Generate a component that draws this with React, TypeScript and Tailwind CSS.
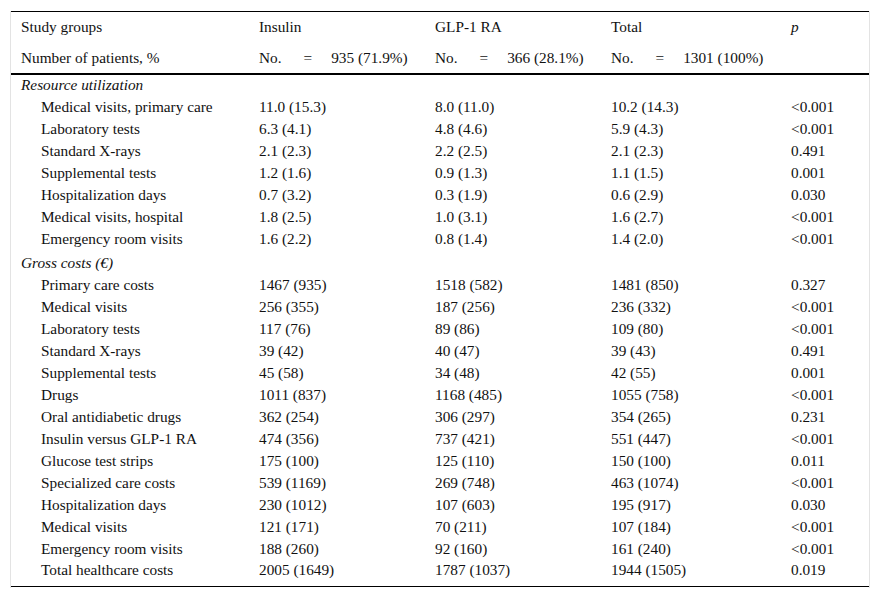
import React from 'react';

type Row = { label: string; ins: string; glp: string; total: string; p: string };
type Section = { title: string; rows: Row[] };

const SECTIONS: Section[] = [
  {
    title: 'Resource utilization',
    rows: [
      { label: 'Medical visits, primary care', ins: '11.0 (15.3)', glp: '8.0 (11.0)', total: '10.2 (14.3)', p: '<0.001' },
      { label: 'Laboratory tests', ins: '6.3 (4.1)', glp: '4.8 (4.6)', total: '5.9 (4.3)', p: '<0.001' },
      { label: 'Standard X-rays', ins: '2.1 (2.3)', glp: '2.2 (2.5)', total: '2.1 (2.3)', p: '0.491' },
      { label: 'Supplemental tests', ins: '1.2 (1.6)', glp: '0.9 (1.3)', total: '1.1 (1.5)', p: '0.001' },
      { label: 'Hospitalization days', ins: '0.7 (3.2)', glp: '0.3 (1.9)', total: '0.6 (2.9)', p: '0.030' },
      { label: 'Medical visits, hospital', ins: '1.8 (2.5)', glp: '1.0 (3.1)', total: '1.6 (2.7)', p: '<0.001' },
      { label: 'Emergency room visits', ins: '1.6 (2.2)', glp: '0.8 (1.4)', total: '1.4 (2.0)', p: '<0.001' },
    ],
  },
  {
    title: 'Gross costs (€)',
    rows: [
      { label: 'Primary care costs', ins: '1467 (935)', glp: '1518 (582)', total: '1481 (850)', p: '0.327' },
      { label: 'Medical visits', ins: '256 (355)', glp: '187 (256)', total: '236 (332)', p: '<0.001' },
      { label: 'Laboratory tests', ins: '117 (76)', glp: '89 (86)', total: '109 (80)', p: '<0.001' },
      { label: 'Standard X-rays', ins: '39 (42)', glp: '40 (47)', total: '39 (43)', p: '0.491' },
      { label: 'Supplemental tests', ins: '45 (58)', glp: '34 (48)', total: '42 (55)', p: '0.001' },
      { label: 'Drugs', ins: '1011 (837)', glp: '1168 (485)', total: '1055 (758)', p: '<0.001' },
      { label: 'Oral antidiabetic drugs', ins: '362 (254)', glp: '306 (297)', total: '354 (265)', p: '0.231' },
      { label: 'Insulin versus GLP-1 RA', ins: '474 (356)', glp: '737 (421)', total: '551 (447)', p: '<0.001' },
      { label: 'Glucose test strips', ins: '175 (100)', glp: '125 (110)', total: '150 (100)', p: '0.011' },
      { label: 'Specialized care costs', ins: '539 (1169)', glp: '269 (748)', total: '463 (1074)', p: '<0.001' },
      { label: 'Hospitalization days', ins: '230 (1012)', glp: '107 (603)', total: '195 (917)', p: '0.030' },
      { label: 'Medical visits', ins: '121 (171)', glp: '70 (211)', total: '107 (184)', p: '<0.001' },
      { label: 'Emergency room visits', ins: '188 (260)', glp: '92 (160)', total: '161 (240)', p: '<0.001' },
      { label: 'Total healthcare costs', ins: '2005 (1649)', glp: '1787 (1037)', total: '1944 (1505)', p: '0.019' },
    ],
  },
];

// header "No. = n (x%)" cell
function Count({ n }: { n: string }) {
  return (
    <span className="flex items-baseline">
      <span>No.</span>
      <span className="ml-[22px]">=</span>
      <span className="ml-[19px]">{n}</span>
    </span>
  );
}

export default function App() {
  return (
    <div className="min-h-screen bg-white pt-[11px] font-['Liberation_Serif','Times_New_Roman',serif] text-[15.3px] leading-[18px] text-[#111]">
      <div className="ml-[10px] w-[860px] border-x border-[#e3e3e3] pb-[1px]">
        <table className="w-[858px] table-fixed border-collapse">
          <colgroup>
            <col className="w-[238px]" />
            <col className="w-[176px]" />
            <col className="w-[176px]" />
            <col className="w-[180px]" />
            <col className="w-[88px]" />
          </colgroup>
          <thead>
            <tr className="h-[31px] border-t border-black">
              <th className="pl-[10px] text-left font-normal">Study groups</th>
              <th className="pl-[10px] text-left font-normal">Insulin</th>
              <th className="pl-[10px] text-left font-normal">GLP-1 RA</th>
              <th className="pl-[10px] text-left font-normal">Total</th>
              <th className="pl-[10px] text-left font-normal italic">p</th>
            </tr>
            <tr className="h-[31px] border-b-2 border-black">
              <th className="pl-[10px] text-left font-normal">Number of patients, %</th>
              <th className="pl-[10px] text-left font-normal"><Count n="935 (71.9%)" /></th>
              <th className="pl-[10px] text-left font-normal"><Count n="366 (28.1%)" /></th>
              <th className="pl-[10px] text-left font-normal"><Count n="1301 (100%)" /></th>
              <th />
            </tr>
          </thead>
          <tbody className="border-b border-black">
            {SECTIONS.map((s, si) => (
              <React.Fragment key={s.title}>
                <tr className={si === 0 ? 'h-[22px]' : 'h-[24px]'}>
                  <td colSpan={5} className={si === 0 ? 'pl-[10px] italic' : 'pl-[10px] pt-[2px] italic'}>{s.title}</td>
                </tr>
                {s.rows.map((r, i) => {
                  const last = si === SECTIONS.length - 1 && i === s.rows.length - 1;
                  const cell = last ? 'pb-[5px]' : '';
                  return (
                    <tr key={s.title + i} className={last ? 'h-[27px]' : 'h-[22px]'}>
                      <td className={`pl-[30px] ${cell}`}>{r.label}</td>
                      <td className={`pl-[10px] ${cell}`}>{r.ins}</td>
                      <td className={`pl-[10px] ${cell}`}>{r.glp}</td>
                      <td className={`pl-[10px] ${cell}`}>{r.total}</td>
                      <td className={`pl-[10px] ${cell}`}>{r.p}</td>
                    </tr>
                  );
                })}
              </React.Fragment>
            ))}
          </tbody>
        </table>
      </div>
    </div>
  );
}
